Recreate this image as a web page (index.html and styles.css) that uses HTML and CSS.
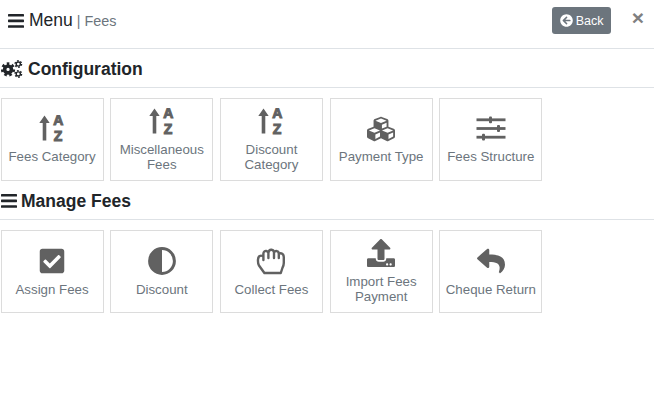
FILE: index.html
```html
<!DOCTYPE html>
<html lang="en">
<head>
<meta charset="UTF-8">
<meta name="viewport" content="width=device-width, initial-scale=1.0">
<link rel="stylesheet" href="styles.css">
<title>Fees Menu</title>
</head>
<body>
  <div class="wrapper">
    <div class="top-bar">
      <div class="page-title">
        <svg class="bars-icon" viewBox="0 0 16 14"><rect y="0" width="16" height="2.6" rx="0.6"/><rect y="5.6" width="16" height="2.6" rx="0.6"/><rect y="11.2" width="16" height="2.6" rx="0.6"/></svg>
        <span class="title-main">Menu</span>
        <span class="title-sep">|</span>
        <span class="title-sub">Fees</span>
      </div>
      <div class="top-actions">
        <button class="back-btn">
          <svg class="back-icon" viewBox="0 0 512 512"><path d="M256 504C119 504 8 393 8 256S119 8 256 8s248 111 248 248-111 248-248 248zm28.9-143.6L209.4 288H392c13.3 0 24-10.7 24-24v-16c0-13.3-10.7-24-24-24H209.4l75.5-72.4c9.7-9.3 9.9-24.8.4-34.3l-11-10.9c-9.4-9.4-24.6-9.4-33.9 0L107.7 239c-9.4 9.4-9.4 24.6 0 33.9l132.7 132.7c9.4 9.4 24.6 9.4 33.9 0l11-11c9.5-9.5 9.3-25-.4-34.3z"/></svg>
          Back
        </button>
        <span class="close-btn">&times;</span>
      </div>
    </div>

    <!-- Configuration -->
    <h2 class="section-title">
      <svg class="cogs-icon" viewBox="0 0 24 20">
        <circle class="gear-teeth" cx="7.6" cy="10.5" r="6.4"/>
        <circle class="gear-ring" cx="7.6" cy="10.5" r="3.8"/>
        <circle class="gear-teeth small" cx="19" cy="4.5" r="3.6"/>
        <circle class="gear-ring small" cx="19" cy="4.5" r="2.3"/>
        <circle class="gear-teeth small" cx="19" cy="15.5" r="3.6"/>
        <circle class="gear-ring small" cx="19" cy="15.5" r="2.3"/>
      </svg>
      Configuration
    </h2>
    <div class="card-row">
      <a class="card">
        <svg class="card-icon" viewBox="0 0 30 28"><use href="#sort-az"/></svg>
        <span class="card-label">Fees Category</span>
      </a>
      <a class="card">
        <svg class="card-icon" viewBox="0 0 30 28"><use href="#sort-az"/></svg>
        <span class="card-label">Miscellaneous Fees</span>
      </a>
      <a class="card">
        <svg class="card-icon" viewBox="0 0 30 28"><use href="#sort-az"/></svg>
        <span class="card-label">Discount Category</span>
      </a>
      <a class="card">
        <svg class="card-icon" viewBox="0 0 512 512"><path d="M488.6 250.2L392 214V105.5c0-15-9.3-28.4-23.4-33.7l-100-37.5c-8.1-3.1-17.1-3.1-25.3 0l-100 37.5c-14.1 5.3-23.4 18.7-23.4 33.7V214l-96.6 36.2C9.3 255.5 0 268.9 0 283.9V394c0 13.6 7.7 26.1 19.9 32.2l100 50c10.1 5.1 22.1 5.1 32.2 0l103.9-52 103.9 52c10.1 5.1 22.1 5.1 32.2 0l100-50c12.2-6.1 19.9-18.6 19.9-32.2V283.9c0-15-9.3-28.4-23.4-33.7zM358 214.8l-85 31.9v-68.2l85-37v73.3zM154 104.1l102-38.2 102 38.2v.6l-102 41.4-102-41.4v-.6zm84 291.1l-85 42.5v-79.1l85-38.8v75.4zm0-112l-102 41.4-102-41.4v-.6l102-38.2 102 38.2v.6zm240 112l-85 42.5v-79.1l85-38.8v75.4zm0-112l-102 41.4-102-41.4v-.6l102-38.2 102 38.2v.6z"/></svg>
        <span class="card-label">Payment Type</span>
      </a>
      <a class="card">
        <svg class="card-icon" viewBox="0 0 30 28">
          <rect x="0.5" y="3.4" width="29" height="2.8"/><rect x="13" y="1.4" width="3" height="6.8" rx="1"/>
          <rect x="0.5" y="12.1" width="29" height="2.8"/><rect x="21" y="10.1" width="3" height="6.8" rx="1"/>
          <rect x="0.5" y="20.8" width="29" height="2.8"/><rect x="6" y="18.8" width="3" height="6.8" rx="1"/>
        </svg>
        <span class="card-label">Fees Structure</span>
      </a>
    </div>

    <!-- Manage Fees -->
    <h2 class="section-title">
      <svg class="bars-icon heading-bars" viewBox="0 0 16 14"><rect y="0" width="16" height="2.6" rx="0.6"/><rect y="5.6" width="16" height="2.6" rx="0.6"/><rect y="11.2" width="16" height="2.6" rx="0.6"/></svg>
      Manage Fees
    </h2>
    <div class="card-row manage-row">
      <a class="card">
        <svg class="card-icon" viewBox="-32 0 512 512"><path d="M400 480H48c-26.51 0-48-21.49-48-48V80c0-26.51 21.49-48 48-48h352c26.51 0 48 21.49 48 48v352c0 26.51-21.49 48-48 48zm-204.686-98.059l184-184c6.248-6.248 6.248-16.379 0-22.627l-22.627-22.627c-6.248-6.248-16.379-6.249-22.628 0L184 302.745l-69.059-69.059c-6.248-6.248-16.379-6.248-22.628 0L69.686 256.313c-6.248 6.248-6.248 16.379 0 22.627l104 104c6.249 6.25 16.379 6.25 22.628.001z"/></svg>
        <span class="card-label">Assign Fees</span>
      </a>
      <a class="card">
        <svg class="card-icon" viewBox="0 0 28 28"><circle class="ring" cx="14" cy="14" r="12.4"/><path d="M14 1.6a12.4 12.4 0 0 0 0 24.8z"/></svg>
        <span class="card-label">Discount</span>
      </a>
      <a class="card">
        <svg class="card-icon" viewBox="0 0 30 28"><path class="outline" d="M8.4 26 L3 18.5 C2 17 1.8 15.6 2 12.5 C2.2 10 3.2 8.6 5 8.6 C6 8.6 6.8 9 7.4 9.8 L7.4 6.4 C7.6 4.4 9 3.8 10.2 4 C11.2 4.2 12 4.8 12.4 5.8 C12.8 3.6 14.2 2.6 15.6 2.8 C17 3 17.8 4 18 5.4 C18.8 4.2 19.8 3.8 21 4.2 C22.4 4.6 22.8 5.8 22.8 7 C23.8 6.2 25 6 26.2 6.8 C27.4 7.6 27.8 8.6 27.8 10.2 L27.8 16 C27.8 18 27.2 19.4 26.4 21 L24.8 26 Z M7.4 9.8 L7.4 13 M12.4 5.8 L12.4 11 M18 5.4 L18 11 M22.8 7 L22.8 11"/></svg>
        <span class="card-label">Collect Fees</span>
      </a>
      <a class="card">
        <svg class="card-icon" viewBox="0 0 512 512"><path d="M296 384h-80c-13.3 0-24-10.7-24-24V192h-87.7c-17.8 0-26.7-21.5-14.1-34.1L242.3 5.7c7.5-7.5 19.8-7.5 27.3 0l152.2 152.2c12.6 12.6 3.7 34.1-14.1 34.1H320v168c0 13.3-10.7 24-24 24zm216-8v112c0 13.3-10.7 24-24 24H24c-13.3 0-24-10.7-24-24V376c0-13.3 10.7-24 24-24h136v8c0 30.9 25.1 56 56 56h80c30.9 0 56-25.1 56-56v-8h136c13.3 0 24 10.7 24 24zm-124 88c0-11-9-20-20-20s-20 9-20 20 9 20 20 20 20-9 20-20zm64 0c0-11-9-20-20-20s-20 9-20 20 9 20 20 20 20-9 20-20z"/></svg>
        <span class="card-label">Import Fees Payment</span>
      </a>
      <a class="card">
        <svg class="card-icon" viewBox="0 0 512 512"><path d="M8.309 189.836L184.313 37.851C199.719 24.546 224 35.347 224 56.015v80.053c160.629 1.839 288 34.032 288 186.258 0 61.441-39.581 122.309-83.333 154.132-13.653 9.931-33.111-2.533-28.077-18.631 45.344-145.012-21.507-183.51-176.59-185.742V360c0 20.7-24.3 31.453-39.687 18.164l-176.004-152c-11.071-9.562-11.086-26.753 0-36.328z"/></svg>
        <span class="card-label">Cheque Return</span>
      </a>
    </div>
  </div>

  <!-- shared arrow + letters icon -->
  <svg class="icon-defs" aria-hidden="true">
    <symbol id="sort-az" viewBox="0 0 30 28">
      <path d="M7.5.5l5.2 7.5h-3.4v17.5h-3.6v-17.5h-3.4z"/>
      <text class="az-letter" x="16.3" y="10.2">A</text>
      <text class="az-letter" x="16.8" y="25.5">Z</text>
    </symbol>
  </svg>
</body>
</html>
```

FILE: styles.css
```css
* {
  box-sizing: border-box;
}
body {
  margin: 0;
  background-color: #ffffff;
  font-family: "Liberation Sans", Arial, sans-serif;
  color: #212529;
}
.wrapper {
  width: 654px;
}
.top-bar {
  display: flex;
  justify-content: space-between;
  align-items: center;
  height: 49px;
  padding: 0 10px 7px 8px;
  border-bottom: 1px solid #dee2e6;
}
.page-title {
  display: flex;
  align-items: center;
}
.bars-icon {
  width: 16px;
  height: 14px;
  fill: #212529;
  margin-right: 5px;
}
.title-main {
  font-size: 17.5px;
  margin-right: 4px;
}
.title-sep {
  font-size: 14px;
  color: #6c757d;
  margin-right: 4px;
}
.title-sub {
  font-size: 14.4px;
  color: #6c757d;
}
.top-actions {
  display: flex;
  align-items: center;
  gap: 21px;
}
.back-btn {
  display: flex;
  align-items: center;
  gap: 3px;
  height: 27px;
  width: 59px;
  padding: 0 0 0 8px;
  border: none;
  border-radius: 3px;
  background-color: #6c757d;
  color: #ffffff;
  font-family: inherit;
  font-size: 12.5px;
}
.back-icon {
  width: 13px;
  height: 13px;
  fill: #ffffff;
}
.close-btn {
  font-size: 21px;
  font-weight: bold;
  line-height: 1;
  color: #808080;
  margin-top: -6px;
}
.section-title {
  display: flex;
  align-items: center;
  gap: 5px;
  height: 39px;
  margin: 0 0 10px 0;
  padding: 2px 0 0 1px;
  border-bottom: 1px solid #dee2e6;
  font-size: 17.5px;
  font-weight: bold;
}
.cogs-icon {
  width: 22px;
  height: 18px;
}
.gear-teeth {
  fill: none;
  stroke: #212529;
  stroke-width: 3;
  stroke-dasharray: 2.8 2.8;
}
.gear-teeth.small {
  stroke-width: 1.6;
  stroke-dasharray: 1.9 1.87;
}
.gear-ring {
  fill: #ffffff;
  stroke: #212529;
  stroke-width: 4;
}
.gear-ring.small {
  stroke-width: 1.6;
}
.heading-bars {
  margin-right: -1px;
}
.card-row {
  display: flex;
  gap: 6.7px;
  padding-left: 0.6px;
}
.card {
  display: flex;
  flex-direction: column;
  align-items: center;
  justify-content: center;
  width: 103px;
  height: 83px;
  padding: 0 4px;
  border: 1px solid #dcdcdc;
  text-align: center;
}
.card-icon {
  width: 30px;
  height: 28px;
  fill: #616161;
  margin-bottom: 6px;
}
.manage-row .card-icon {
  margin-bottom: 7px;
}
.card-label {
  font-size: 13.3px;
  line-height: 15px;
  color: #6c757d;
}
.ring {
  fill: none;
  stroke: #616161;
  stroke-width: 3;
}
.outline {
  fill: none;
  stroke: #616161;
  stroke-width: 2.4;
  stroke-linejoin: round;
  stroke-linecap: round;
}
.az-letter {
  font-family: "Liberation Sans", Arial, sans-serif;
  font-size: 14px;
  font-weight: bold;
  stroke: #616161;
  stroke-width: 1px;
}
.icon-defs {
  display: none;
}
```
